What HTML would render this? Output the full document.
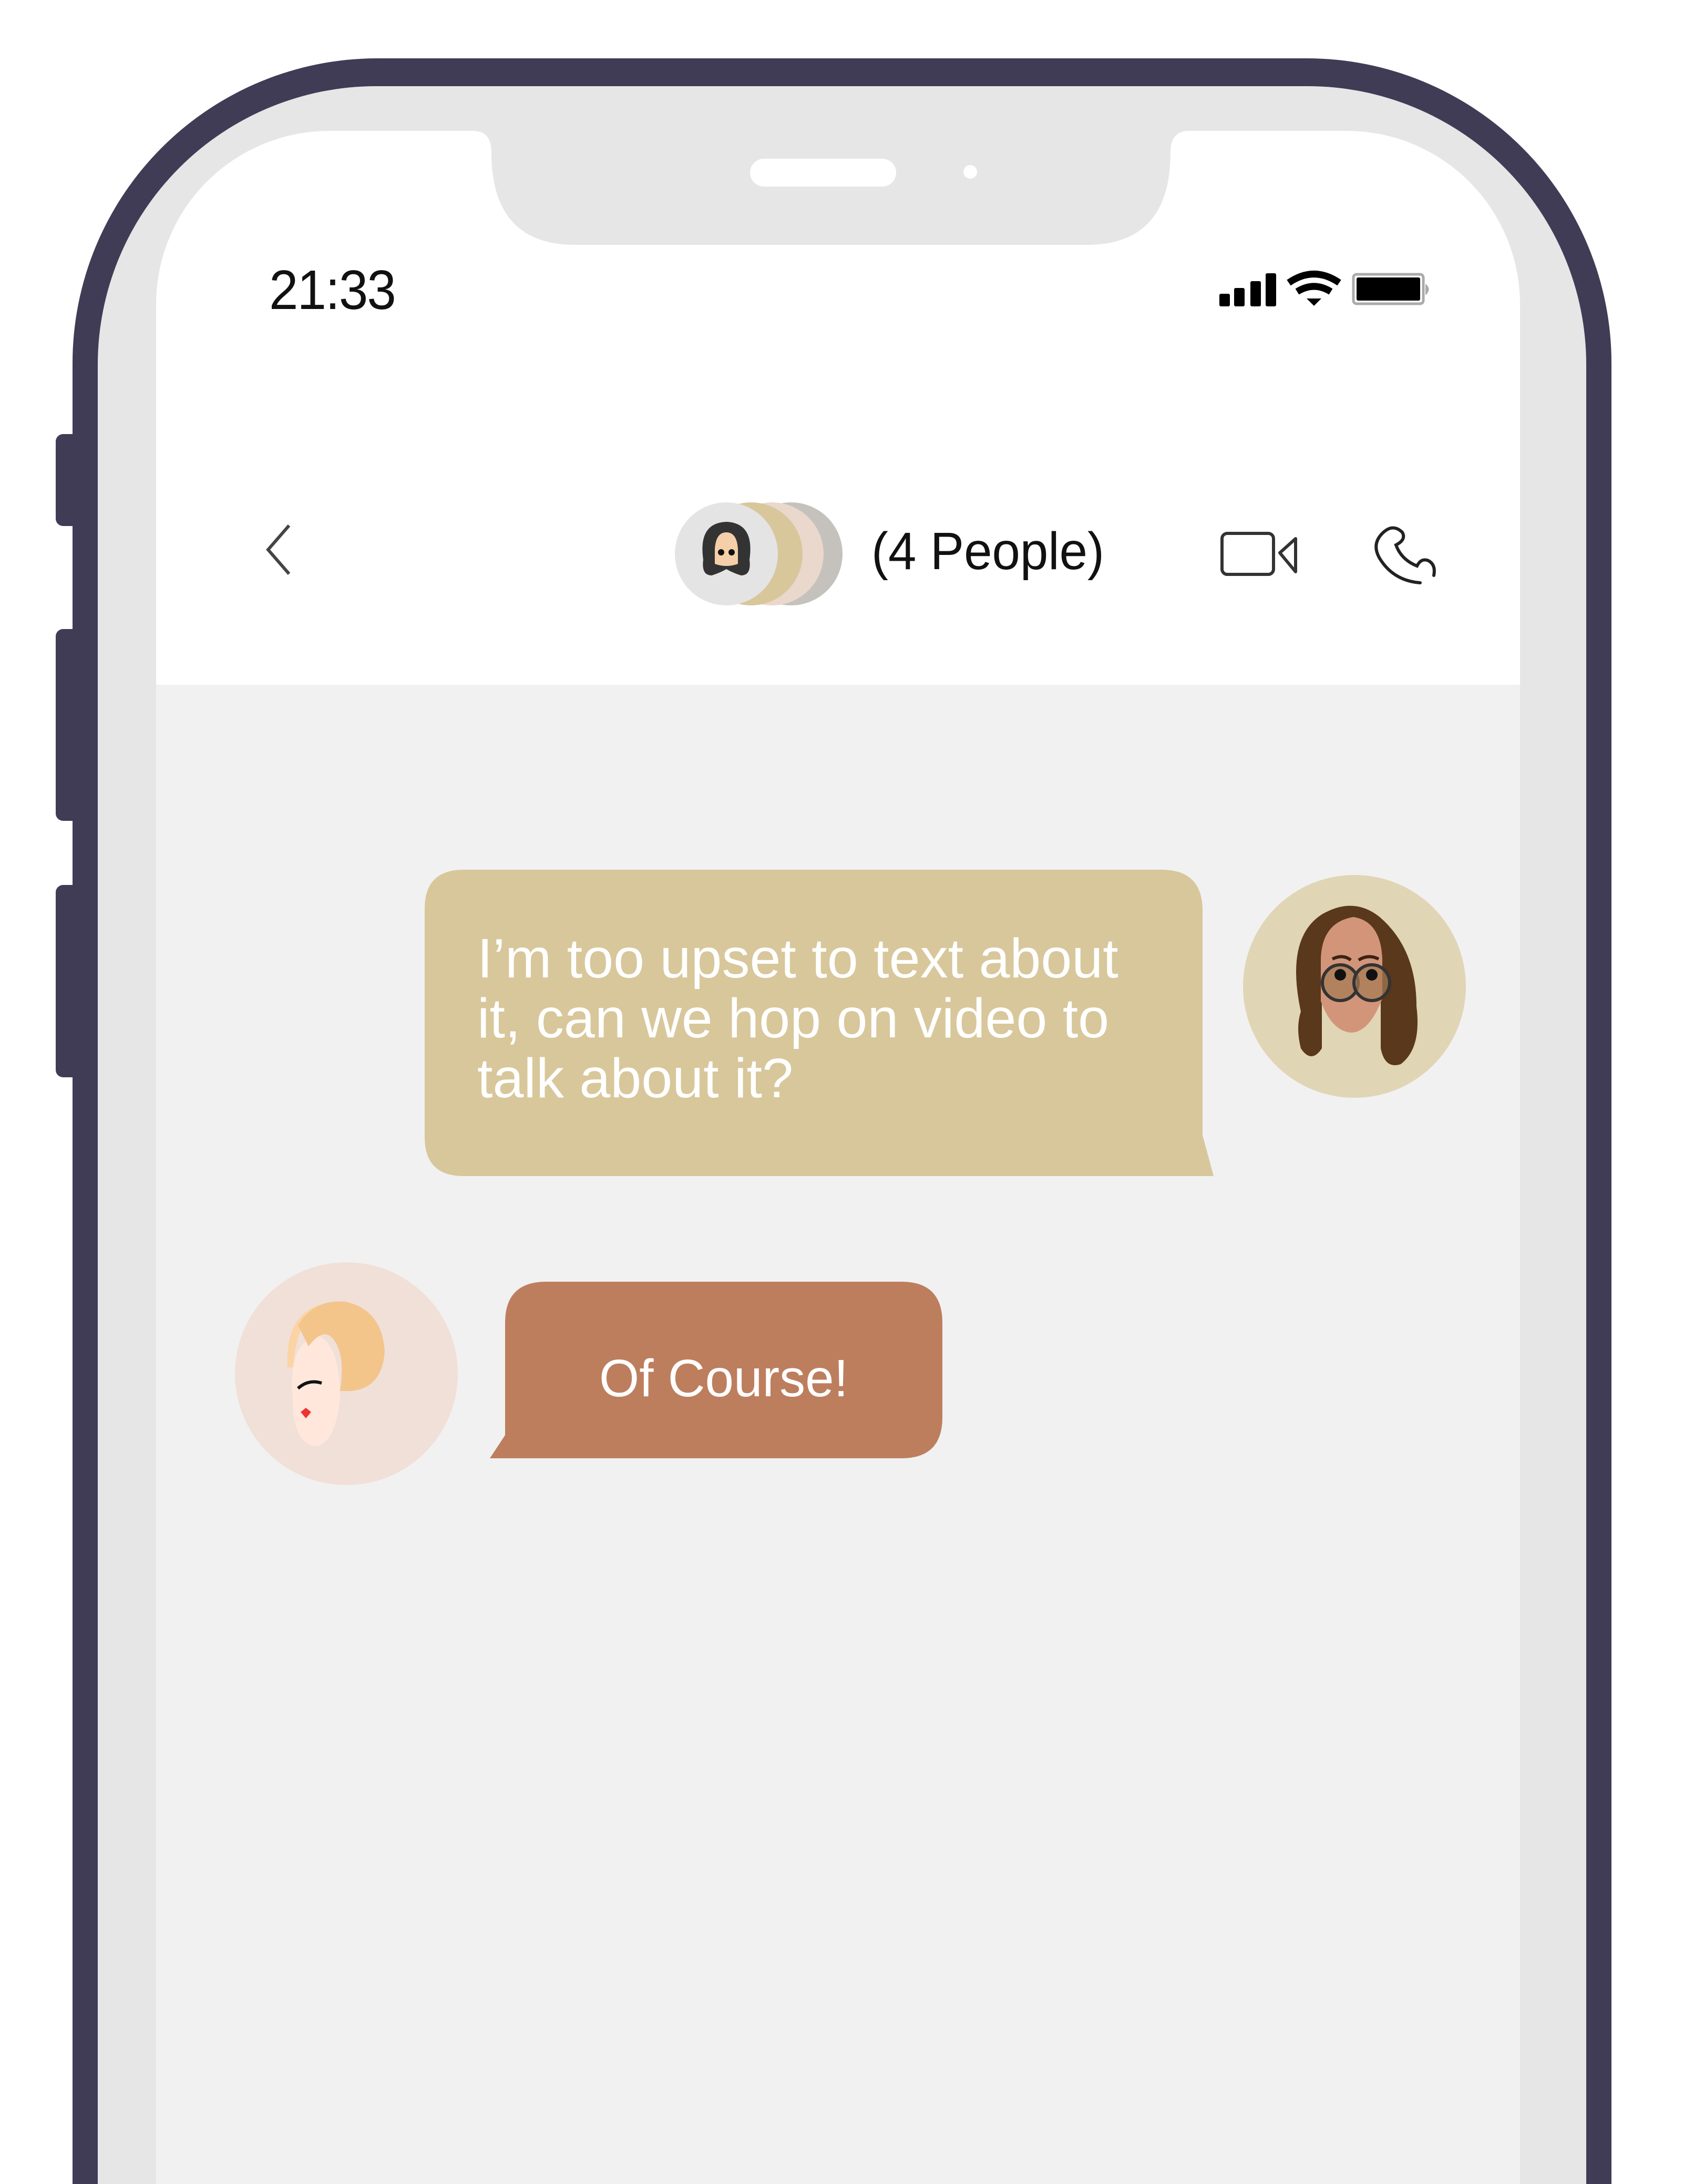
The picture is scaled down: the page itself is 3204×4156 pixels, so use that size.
<!DOCTYPE html>
<html><head><meta charset="utf-8"><style>
html,body{margin:0;padding:0}
body{width:3204px;height:4156px;position:relative;overflow:hidden;background:#fff;font-family:"Liberation Sans",sans-serif}
.a{position:absolute}
</style></head><body>
<!-- side buttons -->
<div class="a" style="left:106px;top:826px;width:50px;height:175px;background:#403c56;border-radius:14px"></div>
<div class="a" style="left:106px;top:1197px;width:50px;height:365px;background:#403c56;border-radius:14px"></div>
<div class="a" style="left:106px;top:1684px;width:50px;height:366px;background:#403c56;border-radius:14px"></div>
<!-- frame -->
<div class="a" style="left:138px;top:111px;width:2928px;height:4045px;background:#403c56;border-radius:580px 580px 0 0"></div>
<div class="a" style="left:186px;top:164px;width:2832px;height:3992px;background:#e6e6e6;border-radius:530px 530px 0 0"></div>
<!-- screen -->
<div class="a" style="left:297px;top:249px;width:2595px;height:3907px;background:#f1f1f1;border-radius:330px 330px 0 0;overflow:hidden">
  <div class="a" style="left:0;top:0;width:2595px;height:1054px;background:#fff"></div>
</div>
<!-- notch -->
<svg class="a" style="left:0;top:0" width="3204" height="600">
  <path d="M900 249 Q935 249 935 290 Q935 466 1095 466 L2067 466 Q2227 466 2227 290 Q2227 249 2262 249 Z" fill="#e6e6e6"/>
  <rect x="1427" y="302" width="278" height="53" rx="26.5" fill="#fff"/>
  <circle cx="1846" cy="327" r="13" fill="#fff"/>
</svg>
<!-- time -->
<div class="a" style="left:512px;top:492px;font-size:106px;color:#111;letter-spacing:-2px;transform:scaleX(.94);transform-origin:left">21:33</div>
<!-- status icons -->
<svg class="a" style="left:2300px;top:500px" width="440" height="90">
  <rect x="20" y="59" width="20" height="24" rx="3"/>
  <rect x="48" y="48" width="20" height="35" rx="3"/>
  <rect x="79" y="35" width="20" height="48" rx="3"/>
  <rect x="108" y="20" width="20" height="63" rx="3"/>
  <path d="M152 38 Q200 5 248 38" stroke="#000" stroke-width="13" fill="none"/>
  <path d="M168 55 Q200 35 232 55" stroke="#000" stroke-width="13" fill="none"/>
  <path d="M186 68 L214 68 L200 82 Z" fill="#000"/>
  <rect x="275" y="22" width="133" height="56" rx="6" fill="none" stroke="#aaa" stroke-width="5"/>
  <rect x="281" y="28" width="121" height="44" rx="3" fill="#000"/>
  <path d="M412 40 Q425 50 412 62 Z" fill="#aaa"/>
</svg>
<!-- back chevron -->
<svg class="a" style="left:490px;top:990px" width="80" height="120"><path d="M60 10 L20 56 L60 102" stroke="#444" stroke-width="6" fill="none"/></svg>
<!-- avatar stack -->
<svg class="a" style="left:1270px;top:945px" width="350" height="220">
  <circle cx="235" cy="109" r="98" fill="#c5c2bd"/>
  <circle cx="199" cy="109" r="98" fill="#ead8cc"/>
  <circle cx="159" cy="109" r="98" fill="#d8c79b"/>
  <circle cx="112" cy="109" r="98" fill="#e4e4e4"/>
  <path d="M68 120 Q58 50 112 48 Q166 50 156 120 Q160 150 140 150 Q124 145 112 138 Q100 145 84 150 Q64 150 68 120Z" fill="#333"/>
  <path d="M90 100 Q92 68 112 68 Q132 68 134 100 L134 128 Q112 136 90 128 Z" fill="#f5cfa9"/>
  <circle cx="102" cy="106" r="6" fill="#111"/><circle cx="122" cy="106" r="6" fill="#111"/>
</svg>
<div class="a" style="left:1658px;top:992px;font-size:100px;color:#111;transform:scaleX(.96);transform-origin:left">(4 People)</div>
<!-- video icon -->
<svg class="a" style="left:2310px;top:1000px" width="170" height="110">
  <rect x="15" y="15" width="98" height="78" rx="10" fill="none" stroke="#333" stroke-width="6"/>
  <path d="M125 52 L155 25 L155 88 Z" fill="none" stroke="#333" stroke-width="6" stroke-linejoin="round"/>
</svg>
<!-- phone icon -->
<svg class="a" style="left:2600px;top:995px" width="140" height="130">
  <path d="M30 20 Q50 0 68 18 Q76 32 56 42 Q66 70 96 82 Q104 66 118 72 Q132 80 128 100 M30 20 Q10 40 24 66 Q50 110 102 114" stroke="#222" stroke-width="6" fill="none" stroke-linecap="round"/>
</svg>
<!-- bubble 1 -->
<svg class="a" style="left:800px;top:1650px" width="1520" height="600">
  <path d="M82 5 H1410 Q1488 5 1488 83 V510 L1509 588 H82 Q8 588 8 514 V79 Q8 5 82 5Z" fill="#d8c79b"/>
</svg>
<div class="a" style="left:908px;top:1767px;width:1500px;font-size:106px;line-height:114px;color:#fff">I’m too upset to text about<br>it, can we hop on video to<br>talk about it?</div>
<!-- avatar 1 -->
<svg class="a" style="left:2365px;top:1665px" width="424" height="424">
  <circle cx="212" cy="212" r="212" fill="#e0d5b5"/>
  <path d="M110 260 Q80 120 150 75 Q210 40 260 80 Q330 140 330 250 Q340 330 300 360 Q270 370 262 330 L262 200 L150 200 L150 330 Q130 360 110 330 Q100 290 110 260Z" fill="#5a381c"/>
  <path d="M148 160 Q150 90 210 80 Q262 88 265 160 L265 235 Q240 300 205 300 Q168 296 148 240 Z" fill="#d3957a"/>
  <path d="M170 160 Q190 150 205 162 M220 162 Q238 150 258 160" stroke="#3b2314" stroke-width="6" fill="none"/>
  <circle cx="185" cy="205" r="34" fill="#a47a52" fill-opacity=".7" stroke="#333" stroke-width="6"/>
  <circle cx="245" cy="205" r="34" fill="#a47a52" fill-opacity=".7" stroke="#333" stroke-width="6"/>
  <circle cx="185" cy="190" r="11" fill="#111"/><circle cx="245" cy="190" r="11" fill="#111"/>
</svg>
<!-- bubble 2 -->
<svg class="a" style="left:920px;top:2435px" width="890" height="350">
  <path d="M110 4 H795 Q873 4 873 82 V262 Q873 340 795 340 H12 L41 296 V82 Q41 4 119 4Z" fill="#bd7e5e"/>
</svg>
<div class="a" style="left:1140px;top:2566px;font-size:100px;color:#fff;transform:scaleX(.98);transform-origin:left">Of Course!</div>
<!-- avatar 2 -->
<svg class="a" style="left:447px;top:2402px" width="424" height="424">
  <circle cx="212" cy="212" r="212" fill="#f0e0d8"/>
  <path d="M100 200 Q95 100 165 80 Q120 100 110 200 Z" fill="#fcd3a3"/>
  <path d="M110 260 Q100 150 160 140 Q200 160 200 260 Q190 350 150 350 Q110 340 110 260Z" fill="#ffe7dc"/>
  <path d="M120 120 Q150 70 210 75 Q280 90 285 170 Q280 240 220 245 L200 245 Q210 180 190 150 Q170 120 140 160 Z" fill="#f3c58b"/>
  <path d="M120 240 Q140 222 165 230" stroke="#111" stroke-width="6" fill="none"/>
  <path d="M125 285 l10 -8 l10 8 l-10 12 Z" fill="#e33"/>
</svg>
</body></html>
